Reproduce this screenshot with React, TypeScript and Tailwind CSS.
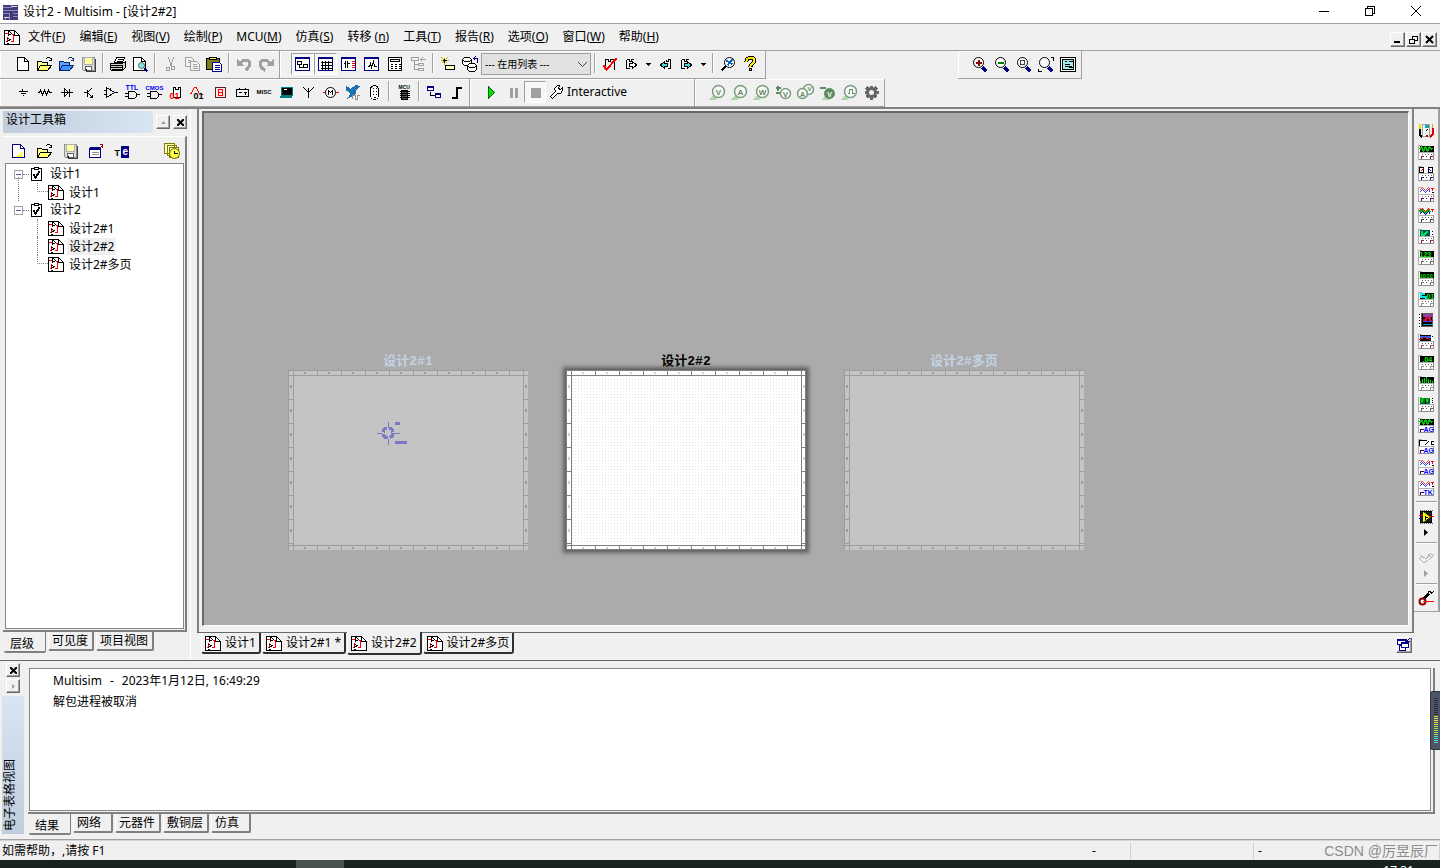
// src/App.tsx
import type { ReactNode } from "react";

type PathProps = { d: string; s?: string; f?: string; w?: number };

// stroke path, black hairline by default
const P = ({ d, s = "#000", f = "none", w = 1 }: PathProps) => (
  <path d={d} stroke={s} fill={f} strokeWidth={w} />
);

type TextProps = { x: number; y: number; c?: string; z?: number; mid?: boolean; children: string };

const T = ({ x, y, c = "#000", z = 7, mid, children }: TextProps) => (
  <text x={x} y={y} fill={c} fontSize={z} textAnchor={mid ? "middle" : "start"} fontWeight="bold" fontFamily="Liberation Sans, sans-serif">
    {children}
  </text>
);

const Lens = (
  <>
    <P d="M10 11L14 15" s="#000080" w={3} />
    <circle cx="6" cy="6" r="5" fill="#fff" stroke="#000" shapeRendering="auto" />
  </>
);

const NavyFrame = (
  <>
    <P d="M0 1H14V14H0Z" s="#000080" f="#fff" />
    <P d="M0 2H14" s="#000080" />
  </>
);

const probe = (letter: string) => (
  <>
    <P d="M0 15L5 9L9 13L6 15Z" s="none" f="#b4d4ae" />
    <circle cx="9" cy="7" r="6" fill="#f8faf8" stroke="#7d9a7d" strokeWidth="1.5" shapeRendering="auto" />
    <T x={9} y={10} c="#5f8a5f" z={8} mid>{letter}</T>
  </>
);

// small bench instrument: a screen on top, terminals underneath
const Bench = ({ screen = "#000", leads = "#000", children }: { screen?: string; leads?: string; children?: ReactNode }) => (
  <>
    <P d="M0 1H15V15H0Z" s="none" f="#fff" />
    <P d="M0 15V1H3M0 8H15" s="#b0b0b0" />
    <P d="M15 1V15H0" s="#909090" />
    <P d="M1 1H15V7H1Z" s="none" f={screen} />
    <P d="M3 10H4M6 10H7M9 10H10M12 10H13" s="#606060" />
    <P d="M2 12H5M7 12H8M11 12H14M3 11V14M12 11V14" s={leads} />
    {children}
  </>
);

// keysight / tektronix style boxes carry their maker's letters at the bottom
const Branded = ({ mark, screen = "#fff", children }: { mark: string; screen?: string; children: ReactNode }) => (
  <>
    <P d="M0 1H15V15H0Z" s="none" f="#fff" />
    <P d="M0 15V1H3M0 8H15" s="#b0b0b0" />
    <P d="M15 1V15H0" s="#909090" />
    <P d="M1 1H15V7H1Z" s="none" f={screen} />
    <T x={5} y={14} c="#00f">{mark}</T>
    <P d="M1 12H5M2 11V14" s="#400060" />
    {children}
  </>
);

const WaveGreen = <P d="M1 5L3 3L5 6L7 3L9 6L11 3L14 5" s="#00c800" w={2} />;

const WavePair = (
  <>
    <P d="M1 6L4 3L7 6L10 3L12 6" s="#2040ff" />
    <P d="M1 4L4 1L7 4L10 1L12 4" s="#f04040" />
    <P d="M12 2H15M14 1V4" s="#f00" />
    <P d="M13 6H15" />
  </>
);

const ICONS: Record<string, ReactNode> = {
  app: (
    <>
      <P d="M0 0H15V15H0Z" s="none" f="#413c78" />
      <P d="M0 3H9V0M0 6H15M0 9H7V15M10 9H15M10 12H15M3 12V15" s="#8f8bbc" />
      <P d="M9 2H14M1 13H6" s="#e0e0f4" />
    </>
  ),
  schematic: (
    <>
      <P d="M0 1H10L15 5V15H0Z" s="none" f="#fff" />
      <P d="M3 1H10L15 6V15H0V1H3" />
      <P d="M10 1V6H15" />
      <P d="M0 4H3M1 12H3V7M7 5H9V12H6" s="#f00" />
      <P d="M4 1V6L7 4Z" f="#fff" />
      <P d="M3 9L6 10L3 12M2 14H4" />
    </>
  ),
  new: <><P d="M3 1H10L14 5V14H3Z" f="#fff" /><P d="M10 1V5H14" /></>,
  newYellow: <><P d="M2 1H10L14 5V14H2Z" s="#000080" f="#fff" /><P d="M10 1V5H14" s="#000080" /><P d="M5 13L12 8V13Z" s="none" f="#ffff60" /></>,
  open: (
    <>
      <P d="M1 14V5H5L6 6H11V9" f="#ffff90" />
      <P d="M1 14L4 9H15L11 14Z" f="#ffff70" />
      <P d="M9 3L11 1H13L15 3M15 1V4H12" />
    </>
  ),
  openBlue: (
    <>
      <P d="M1 14V5H5L6 6H11V9" s="#0a246a" f="#5aa7ff" />
      <P d="M1 14L4 9H15L11 14Z" s="#0a246a" f="#3c96ff" />
      <P d="M9 3L11 1H13L15 3M15 1V4H12" s="#0a246a" />
    </>
  ),
  save: (
    <>
      <P d="M2 1H14V14H3L2 13Z" s="#909090" f="#dcdcdc" />
      <P d="M4 1H12V8H4Z" s="#b0b0b0" f="#ffffa0" />
      <P d="M5 10H11V14H5Z" s="#606060" f="#fff" />
      <P d="M6 12V14" />
      <P d="M15 2V15H5" s="#404040" />
    </>
  ),
  print: (
    <>
      <P d="M4 6L6 1H14L12 6Z" f="#fff" />
      <P d="M7 3H12M6 5H11" />
      <P d="M0 7H12L15 5V11L12 14H1L0 13Z" f="#d0d0d0" />
      <P d="M0 9H12V14M0 11H12M1 13H12" />
      <P d="M5 10H7" s="#c08000" />
    </>
  ),
  preview: (
    <>
      <P d="M1 1H9L13 5V14H1Z" f="#fff" /><P d="M9 1V5H13" />
      <circle cx="9" cy="9" r="3" fill="#80e8e8" stroke="#606060" shapeRendering="auto" />
      <P d="M12 12L15 15" s="#000080" w={2} />
    </>
  ),
  cut: <><P d="M6 1L9 10M11 1L8 10" s="#a0a0a0" /><P d="M4 11H7V14H4ZM9 10H12V13H9Z" s="#a0a0a0" /></>,
  copy: <><P d="M1 1H7L9 3V10H1Z" s="#a0a0a0" f="#f4f4f4" /><P d="M6 5H12L15 8V14H6Z" s="#a0a0a0" f="#f4f4f4" /><P d="M3 4H6M3 6H5M8 8H12M8 10H13M8 12H13" s="#a0a0a0" /></>,
  paste: (
    <>
      <P d="M0 2H13V13H0Z" f="#808020" />
      <P d="M3 3V1H10V3Z" f="#ffff60" />
      <P d="M6 6H13L15 8V15H6Z" s="#000080" f="#fff" />
      <P d="M8 9H13M8 11H13M8 13H13" s="#000080" />
    </>
  ),
  undo: <><P d="M4 7C7 2 14 3 13 8C13 11 10 13 9 14" s="#a0a0a0" w={3} /><P d="M0 2V9H7Z" s="none" f="#a0a0a0" /></>,
  redo: <><P d="M11 7C8 2 1 3 2 8C2 11 5 13 7 14" s="#a0a0a0" w={3} /><P d="M15 2V9H8Z" s="none" f="#a0a0a0" /></>,
  hierarchy: <>{NavyFrame}<P d="M2 5H6V8H2ZM8 8H12V11H8ZM4 8V11H8" /></>,
  grid: <>{NavyFrame}<P d="M4 4V13M7 4V13M10 4V13M2 6H13M2 9H13M2 12H13" /></>,
  component: <>{NavyFrame}<P d="M2 7H4M4 4V11M6 4V11M6 7H8" /><P d="M10 5H13M10 7H13M10 9H13M10 11H13" s="#e00000" /></>,
  grapher: <>{NavyFrame}<P d="M3 10H5L6 7L7 11L9 5L10 10H12" /></>,
  calc: <><P d="M1 1H14V14H1Z" f="#fff" /><P d="M3 3H12V5H3ZM3 8H5M7 8H9M11 8H13M3 10H5M7 10H9M11 10H13M3 12H5M7 12H9M11 12H13" /></>,
  tree: <><P d="M1 1H8V4H1ZM4 4V13H8M8 7H13V9H8ZM8 12H13V14H8ZM4 8H8M10 3H15M12 1L10 3L12 5" s="#a0a0a0" /></>,
  newPart: <><P d="M5 9H14V13H5Z" f="#ffffc0" /><P d="M4 1V8M0 4H8M1 1L7 7M7 1L1 7" s="#c8b000" /><P d="M4 2V6M2 4H6" /></>,
  database: (
    <>
      <P d="M0 3L2 1H7L9 3V7L7 9H2L0 7ZM0 3L2 5H7L9 3" f="#fff" />
      <P d="M5 9L7 7H12L14 9V13L12 15H7L5 13ZM5 9L7 11H12L14 9" f="#fff" />
      <P d="M11 2H15V6M13 0L11 2L13 4" s="#000080" />
    </>
  ),
  erc: <><P d="M3 13V3H6V5H8V3H12V13" /><P d="M1 9L4 13L14 2" s="#f00" w={2} /></>,
  stepOut: <><P d="M2 3H5V5H7V3H9M2 3V12H5" /><P d="M5 7H8V5L12 8.5L8 12V10H5Z" f="#fff" /></>,
  back: <><P d="M13 3V12H10M13 3H11V5H9V3" /><P d="M10 7H7V5L3 8.5L7 12V10H10Z" f="#40e0e0" /></>,
  forward: <><P d="M2 3H5V5H7V3H9M2 3V12H5" /><P d="M5 7H8V5L12 8.5L8 12V10H5Z" f="#40e0e0" /></>,
  find: <><P d="M6 9L1 14" w={2} /><circle cx="9" cy="6" r="5" fill="#fff" stroke="#000" shapeRendering="auto" /><P d="M6 4L9 6L12 3M9 6L7 9M9 6L12 8" s="#1060c0" w={2} /></>,
  help: <><path d="M4 5C4 0 12 0 12 4C12 7 8 7 8 10" fill="none" stroke="#000" strokeWidth="4" /><path d="M4 5C4 0 12 0 12 4C12 7 8 7 8 10" fill="none" stroke="#ffee00" strokeWidth="2" /><P d="M7 12H9V14H7Z" f="#fe0" /></>,
  zoomIn: <>{Lens}<P d="M3 6H9M6 3V9" s="#900000" w={2} /></>,
  zoomOut: <>{Lens}<P d="M3 6H9" s="#008000" w={2} /></>,
  zoomArea: <>{Lens}<P d="M4 4H8V8H4Z" s="#404040" /></>,
  zoomFit: <>{Lens}<P d="M12 1H15V4M0 12V15H3" /></>,
  fullscreen: <><P d="M0 1H15V15H0Z" f="#fff" /><P d="M2 3H13V13H2Z" f="#a0ecec" /><P d="M4 5H6M8 5H12M4 8H9M4 10H11M8 11H12" /></>,

  ground: <P d="M8 4V7M4 7H13M6 9H11M8 11H9" />,
  resistor: <P d="M1 8H3L4 6L6 10L8 6L10 10L12 6L13 8H15" />,
  diode: <P d="M2 8H14M6 4V12L10 8ZM11 4V12" />,
  transistor: <P d="M3 8H7M7 5V12M7 8L11 4M7 8L12 13M9 13H12V10" />,
  opamp: <P d="M4 3V13L12 8ZM1 6H4M1 10H4M12 8H15M8 3V5" />,
  ttl: <><T x={1} y={5} c="#00f">TTL</T><P d="M4 7H10L12 9V12L10 14H4ZM0 9H4M0 12H4M12 10H15" /></>,
  cmos: <><T x={-1} y={5} c="#00f" z={6}>CMOS</T><P d="M4 7H10L12 9V12L10 14H4ZM0 9H4M0 12H4M12 10H15" /></>,
  miscDigital: <><P d="M5 13V3H7V5H10V3H12V13Z" f="#fff" /><T x={1} y={14} c="#f00" z={9}>01</T></>,
  mixed: <><P d="M0 10L4 3H6L8 8L13 11" s="#f00" /><T x={3} y={14} z={9}>01</T></>,
  indicator: <><P d="M3 3H13V13H3Z" s="#602020" f="#f8e8e8" /><P d="M6 5H10V11H6ZM6 8H10" s="#f00" /></>,
  power: <><P d="M2 5H14V12H2ZM5 3V5M11 3V5M4 8H7M9 8H12M11 7V10" /></>,
  misc: <T x={0} y={9} z={6}>MISC</T>,
  advanced: <><P d="M3 3H14V11H3Z" s="#008080" f="#000" /><P d="M1 12H13" s="#008080" w={2} /><P d="M5 5H8" s="#fff" /></>,
  rf: <P d="M8 13V8L3 3M8 8L13 3M8 3V8" />,
  motor: <><P d="M0 8H3M13 8H16" s="#f00" /><circle cx="8" cy="8" r="5" fill="#fff" stroke="#000" shapeRendering="auto" /><P d="M6 10V6L8 8L10 6V10" /></>,
  ni: <><P d="M1 1L6 4L12 0L15 2L12 5L11 10L6 13L3 14L6 9L2 6Z" s="none" f="#2070b0" /><P d="M8 14V11H11V15H13V11H15" s="#909090" /></>,
  connector: <><rect x="4" y="1" width="8" height="14" rx="4" fill="#fff" stroke="#000" /><P d="M6 4H7M9 4H10M6 7H7M9 7H10M6 10H7M9 10H10M7 13H9" /></>,
  mcu: <><T x={2} y={4} z={5}>MCU</T><P d="M5 6H11V15H5Z" f="#555" /><P d="M3 7H13M3 9H13M3 11H13M3 13H13" /></>,
  block: <><P d="M1 2H7V6H1ZM9 9H14V13H9Z" s="#000080" f="#fff" /><P d="M1 2H7M9 9H14" s="#000080" w={2} /><P d="M4 7V11H8" /></>,
  bus: <P d="M3 13H8V3H13" w={2} />,
  play: <P d="M5 2V14L11 8Z" s="#006000" f="#00e000" />,
  pause: <P d="M6 3V13M11 3V13" s="#a0a0a0" w={3} />,
  stop: <P d="M3 3H13V13H3Z" s="none" f="#a0a0a0" />,
  wrench: <P d="M2 12L7 7L6 4L9 1H11L10 4L12 5L14 3V6L12 9H9L4 14Z" f="#fff" />,

  probeV: probe("V"),
  probeA: probe("A"),
  probeW: probe("W"),
  probeDiff: <><P d="M0 3H5M2 1V6M0 8H5" s="#5f8a5f" w={2} /><circle cx="10" cy="9" r="5" fill="#f8faf8" stroke="#7d9a7d" strokeWidth="1.5" shapeRendering="auto" /><T x={10} y={12} c="#5f8a5f" z={8} mid>V</T></>,
  probeVA: <><circle cx="11" cy="5" r="5" fill="#f8faf8" stroke="#7d9a7d" strokeWidth="1.5" shapeRendering="auto" /><circle cx="5" cy="9" r="5" fill="#f8faf8" stroke="#7d9a7d" strokeWidth="1.5" shapeRendering="auto" /><T x={5} y={12} c="#5f8a5f" mid>A</T><T x={12} y={6} c="#5f8a5f" z={6} mid>V</T></>,
  probeRef: <><P d="M0 3H6" s="#5f8a5f" w={2} /><P d="M3 15L7 8L11 15Z" s="none" f="#b4d4ae" /><circle cx="10" cy="9" r="5" fill="#5f8a5f" stroke="#5f8a5f" shapeRendering="auto" /><T x={10} y={12} c="#fff" mid>V</T></>,
  probeDigital: <>{probe("")}<P d="M6 9H8V5H11V9H13" s="#5f8a5f" /></>,
  gear: <><circle cx="8" cy="8" r="4" fill="none" stroke="#666" strokeWidth="3" shapeRendering="auto" /><P d="M8 1V4M8 12V15M1 8H4M12 8H15M3 3L5 5M11 11L13 13M13 3L11 5M3 13L5 11" s="#666" w={3} /></>,

  window: <><P d="M1 5H12V14H1Z" s="#000080" f="#fff" /><P d="M1 5H12" s="#000080" w={3} /><P d="M3 9H10M3 11H10" s="#909090" /><P d="M11 5L14 2M11 1H14V4" s="#900000" /></>,
  rename: <><T x={0} y={12} z={9}>T</T><P d="M6 2H14V14H6Z" s="none" f="#000080" /><T x={8} y={11} c="#fff" z={10}>e</T></>,
  history: (
    <>
      <P d="M0 0H10V10H0ZM3 2H12V12H3Z" s="#808000" f="#ffffc0" />
      <P d="M5 4H14V14H5Z" s="#808000" f="#fff" />
      <circle cx="10" cy="10" r="5" fill="#ffff40" stroke="#606000" shapeRendering="auto" />
      <P d="M10 7V10H13" />
    </>
  ),
  check: <><P d="M2 2H12V14H2Z" f="#fff" /><P d="M5 1H9V3H5Z" f="#fff" /><P d="M4 8L6 11L10 5" w={2} /></>,
  cascade: <><P d="M1 2H9V7H1ZM3 8H9V13H3Z" s="#000080" f="#fff" /><P d="M5 5H12V10H5Z" s="#000080" f="#fff" /><P d="M1 3H9M5 6H12M10 4L13 1M10 1V4H13" s="#000080" /></>,

  multimeter: (
    <>
      <P d="M1 0V5" s="#e8e000" w={2} /><P d="M1 5V11L4 14" w={2} />
      <P d="M14 4V11L11 14" s="#e00000" w={2} /><P d="M14 0V4" s="#f0a000" />
      <P d="M4 1H11V13H4Z" s="#a0a0a0" f="#f4f4f4" />
      <P d="M6 3H10" s="#00b0b0" w={3} /><P d="M7 8L9 6" /><P d="M8 11V13" s="#802000" w={2} />
    </>
  ),
  funcGen: <Bench leads="#802020">{WaveGreen}</Bench>,
  wattmeter: <Bench screen="#fff" leads="#301060"><P d="M1 2H5V7H1ZM10 2H14V7H10Z" /><P d="M2 6L5 3" s="#f00" /><P d="M10 3L13 6" s="#00f" /></Bench>,
  scope: <Bench screen="#fff" leads="#600060">{WavePair}</Bench>,
  scope4: <Bench screen="#fff" leads="#305030"><P d="M1 5L4 2L7 5L10 2L12 5" s="#00c000" w={2} /><P d="M1 3L4 1L7 4L10 1L12 3" s="#f00" /><P d="M1 7L4 4L7 7L10 4L12 7" s="#00f" /><P d="M12 2H15M14 1V4" s="#f00" /></Bench>,
  bode: <Bench leads="#803030"><P d="M1 1H11V7H1Z" s="none" f="#005050" /><P d="M3 2V6H6L9 3" s="#00e060" w={2} /><P d="M11 1H15V7H11Z" s="none" f="#fff" /><P d="M13 3H14M13 6H14" /></Bench>,
  counter: <Bench leads="#606060"><T x={1} y={7} c="#00f000">123</T></Bench>,
  wordGen: <Bench leads="#707070"><T x={1} y={7} c="#00e000" z={6}>1010</T></Bench>,
  converter: <Bench leads="#909090"><P d="M6 2H2V5H7V7" s="#00e8e8" w={2} /><T x={8} y={7} c="#00f000">01</T></Bench>,
  analyzer: <><P d="M0 1H2V15H0Z" s="none" f="#fff" /><path d="M1 1V15" stroke="#000" strokeDasharray="1 2" /><P d="M3 1H14V14H3Z" s="#606060" f="#000" /><P d="M4 3H14" s="#9040a0" w={3} /><P d="M4 7H7V5H11V8H14" s="#e00040" w={2} /><P d="M4 9H14" s="#4040e0" /><P d="M4 12H14" s="#00a0a0" /></>,
  iv: <Bench leads="#905050"><P d="M1 3H12" s="#2060ff" w={2} /><P d="M1 6L6 4L12 6" s="#f00" /><P d="M12 1H15V7H12Z" s="none" f="#fff" /><P d="M13 3H14" /></Bench>,
  distortion: <Bench leads="#909090"><T x={4} y={7} c="#00f000">.04</T></Bench>,
  spectrum: <Bench leads="#909090"><P d="M2 7V5M4 7V3M6 7V2M8 7V1M10 7V3M12 7V4M14 7V5" s="#00e000" /></Bench>,
  network: <Bench leads="#606060"><P d="M1 1H6V7H1ZM7 1H11V7H7Z" s="none" f="#007030" /><P d="M2 2L5 6M5 2L2 6M7 2L10 6M10 2L7 6" s="#00e000" /><P d="M11 1H15V7H11Z" s="none" f="#fff" /><P d="M13 2H14M13 4H14M13 6H14" /></Bench>,
  agGen: <Branded mark="AG" screen="#000">{WaveGreen}</Branded>,
  agMeter: <Branded mark="AG"><P d="M1 2H8M1 1V7M6 7L10 3M12 3H15M13 2V5M12 6H15" /></Branded>,
  agScope: <Branded mark="AG">{WavePair}</Branded>,
  tkScope: <Branded mark="TK">{WavePair}</Branded>,
  labview: <><P d="M2 2H13V13H2Z" f="#102020" /><path d="M1 1H15M1 14H15" stroke="#606060" strokeDasharray="1 1" /><P d="M0 6H4M11 7H15" s="#f00" /><P d="M0 9H4" s="#00f" /><path d="M5 3V12L11 7.5Z" fill="#ffff00" stroke="#ffff00" shapeRendering="auto" /><P d="M6 8H9M7 6V10" /></>,
  elvis: <P d="M1 8L5 12L10 10L15 5L12 3L8 8L3 6ZM2 5L6 8M10 4L13 7" s="#b0b0b0" />,
  clamp: <><circle cx="4" cy="10" r="3" fill="#fff" stroke="#900000" strokeWidth="2" shapeRendering="auto" /><P d="M4 10H15" s="#f00" /><P d="M6 7L10 2" w={3} /><P d="M10 2V0H12L13 2L15 0" /></>,
};

function Icon({ name }: { name: string }) {
  return (
    <svg width="16" height="16" viewBox="-0.5 -0.5 16 16" shapeRendering="crispEdges" className="shrink-0 overflow-visible" aria-hidden="true">
      {ICONS[name]}
    </svg>
  );
}

function Tool({ name, wide, on }: { name: string; wide?: boolean; on?: boolean }) {
  return (
    <button
      type="button"
      aria-label={name}
      className={`flex h-[22px] shrink-0 items-center justify-center ${wide ? "w-[23px]" : "w-[22px]"} ${
        on ? "border border-t-[#a0a0a0] border-l-[#a0a0a0] border-r-white border-b-white bg-[#f7f7f7]" : ""
      }`}
    >
      <Icon name={name} />
    </button>
  );
}

const Sep = () => <span className="mx-[3px] h-5 w-[2px] shrink-0 border-l border-[#a0a0a0] bg-white" />;

const Drop = ({ label }: { label: string }) => (
  <button type="button" aria-label={label} className="flex h-[22px] w-[11px] items-center justify-center">
    <svg width="5" height="3" shapeRendering="crispEdges"><path d="M0 0H5L2.5 3Z" /></svg>
  </button>
);

function Bar({ children, className = "" }: { children: ReactNode; className?: string }) {
  return (
    <div className={`flex h-7 shrink-0 items-start border-r border-b border-[#a0a0a0] pt-[2px] shadow-[inset_1px_1px_0_#fff] ${className}`}>
      {children}
    </div>
  );
}

const MENUS = [
  ["文件(", "F"], ["编辑(", "E"], ["视图(", "V"], ["绘制(", "P"], ["MCU(", "M"], ["仿真(", "S"],
  ["转移 (", "n"], ["工具(", "T"], ["报告(", "R"], ["选项(", "O"], ["窗口(", "W"], ["帮助(", "H"],
];

const PARTS = [
  "ground", "resistor", "diode", "transistor", "opamp", "ttl", "cmos", "miscDigital", "mixed",
  "indicator", "power", "misc", "advanced", "rf", "motor", "ni", "connector",
];

const PROBES = ["probeV", "probeA", "probeW", "probeDiff", "probeVA", "probeRef", "probeDigital", "gear"];

const INSTRUMENTS = [
  "multimeter", "funcGen", "wattmeter", "scope", "scope4", "bode", "counter", "wordGen", "converter",
  "analyzer", "iv", "distortion", "spectrum", "network", "agGen", "agMeter", "agScope", "tkScope",
];

function TitleBar() {
  return (
    <header className="flex h-6 shrink-0 items-center border-b border-[#a0a0a0] bg-white pr-px pl-[2px]">
      <Icon name="app" />
      <h1 className="ml-[5px] flex-1">设计2 - Multisim - [设计2#2]</h1>
      <button type="button" aria-label="最小化" className="flex h-full w-[46px] items-center justify-center pb-[2px]">
        <svg width="10" height="10"><path d="M0 5.5H10" stroke="#000" /></svg>
      </button>
      <button type="button" aria-label="还原" className="flex h-full w-[46px] items-center justify-center pb-[2px]">
        <svg width="10" height="10" fill="none" stroke="#000" shapeRendering="crispEdges"><path d="M.5 2.5H7.5V9.5H.5ZM2.5 2V.5H9.5V7.5H8" /></svg>
      </button>
      <button type="button" aria-label="关闭" className="flex h-full w-[46px] items-center justify-center pb-[2px]">
        <svg width="10" height="10"><path d="M0 0L10 10M10 0L0 10" stroke="#000" /></svg>
      </button>
    </header>
  );
}

const RAISED = "border border-t-white border-l-white border-r-[#696969] border-b-[#696969] shadow-[inset_-1px_-1px_0_#a0a0a0]";

function MenuBar() {
  return (
    <nav className="flex h-[27px] shrink-0 items-center border-b border-[#a0a0a0] pl-1">
      <Icon name="schematic" />
      <div className="ml-2 flex flex-1 gap-[14px]">
        {MENUS.map(([text, key]) => (
          <button key={text} type="button" className="whitespace-pre">
            {text}<u>{key}</u>)
          </button>
        ))}
      </div>
      <div className="mt-[5px] mr-[3px] flex gap-px">
        <button type="button" aria-label="最小化窗口" className={`flex h-[15px] w-[15px] items-center justify-center ${RAISED}`}>
          <svg width="9" height="9"><path d="M1 7H7" stroke="#000" strokeWidth="2" /></svg>
        </button>
        <button type="button" aria-label="还原窗口" className={`flex h-[15px] w-[15px] items-center justify-center ${RAISED}`}>
          <svg width="9" height="9" fill="none" stroke="#000" shapeRendering="crispEdges"><path d="M.5 4.5H5.5V8.5H.5ZM3.5 4V1.5H8.5V5.5H6M3 1H9M0 4H6" /></svg>
        </button>
        <button type="button" aria-label="关闭窗口" className={`flex h-[15px] w-[15px] items-center justify-center ${RAISED}`}>
          <svg width="9" height="9"><path d="M1 1L8 8M8 1L1 8" stroke="#000" strokeWidth="2" /></svg>
        </button>
      </div>
    </nav>
  );
}

function Toolbars() {
  return (
    <div className="shrink-0 border-b-2 border-[#808080]">
      <div className="flex">
        <Bar className="pr-[2px] pl-[11px]">
          {["new", "open", "openBlue", "save"].map((n) => <Tool key={n} name={n} />)}
          <Sep />
          <Tool name="print" />
          <Tool name="preview" />
          <Sep />
          {["cut", "copy", "paste"].map((n) => <Tool key={n} name={n} />)}
          <Sep />
          <Tool name="undo" />
          <Tool name="redo" />
        </Bar>
        <Bar className="pr-1 pl-[11px]">
          <Tool name="hierarchy" wide on />
          <Tool name="grid" wide on />
          {["component", "grapher", "calc", "tree"].map((n) => <Tool key={n} name={n} wide />)}
          <Sep />
          <Tool name="newPart" />
          <Tool name="database" />
          <div className="relative">
            <select aria-label="在用列表" className="h-[22px] w-[110px] appearance-none border border-[#a0a0a0] bg-[#e1e1e1] pl-[3px] text-[10px]">
              <option>--- 在用列表 ---</option>
            </select>
            <svg width="9" height="5" className="pointer-events-none absolute top-[9px] right-1"><path d="M0 0L4.5 4.5L9 0" fill="none" stroke="#444" /></svg>
          </div>
          <Sep />
          <Tool name="erc" />
          <Tool name="stepOut" />
          <Drop label="步出选项" />
          <Tool name="back" />
          <Tool name="forward" />
          <Drop label="前进选项" />
          <Sep />
          <Tool name="find" />
          <Tool name="help" />
        </Bar>
        <Bar className="mr-[358px] ml-auto pr-[2px] pl-[11px]">
          {["zoomIn", "zoomOut", "zoomArea", "zoomFit", "fullscreen"].map((n) => <Tool key={n} name={n} />)}
        </Bar>
      </div>
      <div className="flex">
        <Bar className="pr-[2px] pl-[11px]">
          {PARTS.map((n) => <Tool key={n} name={n} />)}
          <Sep />
          <Tool name="mcu" />
          <Sep />
          <Tool name="block" />
          <Tool name="bus" />
        </Bar>
        <Bar className="w-[225px] pl-[10px]">
          <Tool name="play" />
          <Tool name="pause" />
          <Tool name="stop" on />
          <button type="button" className="ml-[2px] flex h-[22px] items-center gap-[3px]">
            <Icon name="wrench" />
            Interactive
          </button>
        </Bar>
        <Bar className="pr-[2px] pl-[11px]">
          {PROBES.map((n) => <Tool key={n} name={n} />)}
        </Bar>
      </div>
    </div>
  );
}

const TREE = [
  { name: "设计1", sheets: ["设计1"] },
  { name: "设计2", sheets: ["设计2#1", "设计2#2", "设计2#多页"] },
];

function DesignToolbox() {
  return (
    <aside className="flex w-[191px] shrink-0 flex-col border-r border-white pb-[3px] pl-[3px]">
      <div className="mt-[2px] flex h-[22px] shrink-0 items-center gap-[3px] pr-[3px]">
        <h2 className="h-full flex-1 bg-linear-to-r from-[#bfcddc] to-[#d8e5f3] pl-[3px] leading-[18px]">设计工具箱</h2>
        <button type="button" aria-label="收起" className={`flex h-[14px] w-[14px] items-center justify-center ${RAISED}`}>
          <svg width="5" height="3"><path d="M0 3H5L2.5 0Z" fill="#a0a0a0" /></svg>
        </button>
        <button type="button" aria-label="关闭工具箱" className={`flex h-[14px] w-[14px] items-center justify-center ${RAISED}`}>
          <svg width="7" height="7"><path d="M0 0L7 7M7 0L0 7" stroke="#000" strokeWidth="2" /></svg>
        </button>
      </div>
      <div className="mt-[3px] mr-[3px] flex min-h-0 flex-1 flex-col border-t border-r-2 border-b-2 border-t-white border-r-[#808080] border-b-[#808080] pb-px">
        <div className="flex h-[26px] shrink-0 items-center gap-1 pt-[2px] pr-[2px] pl-1">
          {["newYellow", "open", "save", "window", "rename"].map((n) => <Tool key={n} name={n} />)}
          <span className="flex-1" />
          <Tool name="history" />
        </div>
        <div className="mr-px ml-[2px] flex-1 border border-[#828790] bg-white pt-px">
          <ul className="relative">
            <li aria-hidden="true" className="absolute top-3 left-3 h-6 border-l border-dotted border-[#808080]" />
            {TREE.map((design) => (
              <li key={design.name}>
                <div className="flex h-[18px] items-center pl-2">
                  <button type="button" aria-label="折叠" className="flex h-[9px] w-[9px] items-center justify-center border border-[#a0a0a0] bg-white">
                    <span className="h-px w-[5px] bg-[#4060a0]" />
                  </button>
                  <span className="w-[6px] border-t border-dotted border-[#808080]" />
                  <Icon name="check" />
                  <span className="ml-1 px-px">{design.name}</span>
                </div>
                <ul>
                  {design.sheets.map((sheet, i) => (
                    <li key={sheet} className="flex h-[18px] items-center pl-[31px]">
                      <span className={`w-[11px] self-start border-l border-dotted border-[#808080] ${i === design.sheets.length - 1 ? "h-[9px] border-b" : "h-[18px]"}`} />
                      <Icon name="schematic" />
                      <span className={`ml-[3px] px-[2px] leading-[17px] ${sheet === "设计2#2" ? "bg-[#f0f0f0]" : ""}`}>{sheet}</span>
                    </li>
                  ))}
                </ul>
              </li>
            ))}
          </ul>
        </div>
      </div>
      <PanelTabs tabs={["层级", "可见度", "项目视图"]} />
    </aside>
  );
}

function PanelTabs({ tabs }: { tabs: string[] }) {
  return (
    <div className="flex h-[25px] shrink-0 items-start gap-[2px] pl-px">
      {tabs.map((tab, i) => (
        <button
          key={tab}
          type="button"
          className={`rounded-b-[2px] border-b-2 border-[#808080] text-left leading-4 ${
            i === 0 ? "h-[21px] w-[42px] border-r pt-1 pl-[6px]" : "h-[19px] min-w-10 border-r-2 border-l border-l-white pr-1 pl-[3px]"
          }`}
        >
          {tab}
        </button>
      ))}
    </div>
  );
}

const COLS = [29, 53, 77, 101, 125, 149, 173, 197, 221];
const ROWS = [29, 53, 77, 101, 125, 149, 173];

function Sheet({ title, active, children }: { title: string; active?: boolean; children?: ReactNode }) {
  const line = active ? "#808080" : "#9c9c9c";
  return (
    <figure className="flex w-[240px] flex-col items-center">
      <figcaption className={`font-['Liberation_Mono','Noto_Sans_CJK_SC',monospace] text-[13px] leading-4 font-bold ${active ? "text-black" : "text-[#c3d2e2]"}`}>
        {title}
      </figcaption>
      <svg
        viewBox="0 0 240 180"
        shapeRendering="crispEdges"
        className={`w-full ${active ? "shadow-[0_0_4px_3px_#606060]" : ""}`}
        aria-hidden="true"
      >
        <defs>
          <pattern id="dots" width="3" height="3" patternUnits="userSpaceOnUse">
            <rect width="1" height="1" fill="#e4e4e4" />
          </pattern>
        </defs>
        <rect width="240" height="180" fill={active ? "#fff" : "#c4c4c4"} />
        {active && <rect x="6" y="6" width="228" height="168" fill="url(#dots)" />}
        <g fill="none" stroke={line}>
          <path d="M0.5 180V0.5H239.5M5.5 0V180M235.5 0V180M0 5.5H240M0 175.5H240" />
          {active && <path d="M239.5 0V179.5H0" />}
          {COLS.map((x) => <path key={x} d={`M${x}.5 0V5M${x}.5 175V180`} />)}
          {ROWS.map((y) => <path key={y} d={`M0 ${y}.5H5M235 ${y}.5H240`} />)}
        </g>
        <g fill={active ? "#d0d0d0" : "#9c9c9c"}>
          {COLS.map((x) => <path key={x} d={`M${x - 13} 2h2v2h-2zM${x - 13} 177h2v2h-2z`} />)}
          {ROWS.map((y) => <path key={y} d={`M2 ${y - 14}h2v3h-2zM237 ${y - 14}h2v3h-2z`} />)}
        </g>
        {children}
      </svg>
    </figure>
  );
}

function Workspace() {
  return (
    <div className="flex-1 overflow-hidden border-t-2 border-r border-b border-l-2 border-t-[#696969] border-r-white border-b-white border-l-[#696969] bg-[#ababab]">
      <div className="flex gap-[38px] pt-[241px] pl-[84px]">
        <Sheet title="设计2#1">
          <g fill="none" stroke="#7b78c4">
            <circle cx="100" cy="63" r="5" strokeWidth="3" strokeDasharray="6 2" />
            <path d="M100.5 52V58M100.5 69V75M89 63.5H94M106 63.5H112" />
            <path d="M107 53H112" strokeWidth="3" />
            <path d="M107 72H119" strokeWidth="3" />
          </g>
        </Sheet>
        <Sheet title="设计2#2" active />
        <Sheet title="设计2#多页" />
      </div>
    </div>
  );
}

function DocTabs() {
  return (
    <div className="flex h-7 shrink-0 items-start gap-px border-t border-[#696969] pr-[2px] pl-1">
      {["设计1", "设计2#1 *", "设计2#2", "设计2#多页"].map((tab) => (
        <button
          key={tab}
          type="button"
          className={`flex items-center gap-1 rounded-b-[3px] border-r-2 border-b-2 border-l border-[#303030] border-l-white pr-[3px] pl-[3px] ${
            tab === "设计2#2" ? "-mt-px h-[23px] bg-[#f0f0f0]" : "h-[21px]"
          }`}
        >
          <Icon name="schematic" />
          {tab}
        </button>
      ))}
      <button type="button" aria-label="窗口列表" className={`mt-1 ml-auto flex h-4 w-4 items-center justify-center ${RAISED}`}>
        <Icon name="cascade" />
      </button>
    </div>
  );
}

function InstrumentBar() {
  const divider = <span className="my-[3px] h-[2px] w-[21px] border-t border-[#a0a0a0] bg-white" />;
  const arrow = (color: string) => (
    <svg width="4" height="7" className="mt-[2px] mb-[3px]"><path d="M0 0V7L4 3.5Z" fill={color} /></svg>
  );
  return (
    <aside className="w-[26px] shrink-0">
      <div className="flex flex-col items-center border-r-2 border-b border-[#a0a0a0] pt-[11px] pb-[2px]">
        {INSTRUMENTS.map((n) => (
          <button key={n} type="button" aria-label={n} className="flex h-[21px] w-[21px] items-center justify-center">
            <Icon name={n} />
          </button>
        ))}
        {divider}
        <button type="button" aria-label="LabVIEW" className="flex h-[21px] items-center"><Icon name="labview" /></button>
        {arrow("#000")}
        {divider}
        <button type="button" aria-label="ELVIS" className="flex h-[21px] items-center"><Icon name="elvis" /></button>
        {arrow("#a0a0a0")}
        {divider}
        <button type="button" aria-label="电流探针" className="flex h-[21px] items-center"><Icon name="clamp" /></button>
      </div>
    </aside>
  );
}

function SpreadsheetView() {
  return (
    <section className="flex h-[180px] shrink-0 border-t border-b border-t-[#696969] border-b-[#a0a0a0]">
      <div className="flex w-7 shrink-0 flex-col pt-[2px] pb-[5px] pl-[2px]">
        <button type="button" aria-label="关闭视图" className={`ml-1 flex h-[14px] w-[14px] items-center justify-center ${RAISED}`}>
          <svg width="7" height="7"><path d="M0 0L7 7M7 0L0 7" stroke="#000" strokeWidth="2" /></svg>
        </button>
        <button type="button" aria-label="展开视图" className={`mt-[2px] ml-1 flex h-[14px] w-[14px] items-center justify-center ${RAISED}`}>
          <svg width="3" height="5"><path d="M0 0V5L3 2.5Z" fill="#a0a0a0" /></svg>
        </button>
        <div className="mt-[3px] w-[22px] flex-1 rotate-180 bg-linear-to-b from-[#bfcddc] to-[#d8e5f3] pt-[3px] pl-[6px] leading-4 [text-orientation:sideways] [writing-mode:vertical-rl]">
          电子表格视图
        </div>
      </div>
      <div className="flex flex-1 flex-col pt-[7px]">
        <div className="mr-[5px] flex flex-1 flex-col border-r-2 border-b-2 border-r-[#808080] border-b-[#808080] pr-[2px] pb-px">
          <div className="ml-px flex-1 border border-[#828790] bg-white pt-px pl-[23px] leading-[21px]">
            <p className="flex gap-2">
              <span>Multisim</span>
              <span>-</span>
              <span>2023年1月12日, 16:49:29</span>
            </p>
            <p>解包进程被取消</p>
          </div>
        </div>
        <PanelTabs tabs={["结果", "网络", "元器件", "敷铜层", "仿真"]} />
      </div>
    </section>
  );
}

function StatusBar() {
  return (
    <footer className="relative flex h-5 shrink-0 items-center border-t border-[#d4d4d4] pt-px">
      <span className="flex-1 pl-[2px]">如需帮助，,请按 F1</span>
      <span className="h-4 w-[38px]">-</span>
      <span className="h-4 w-[123px] border-l border-[#d0d0d0]" />
      <span className="h-4 w-[123px] border-l border-[#d0d0d0] pl-1">-</span>
      <span className="h-4 w-16 border-x border-[#d0d0d0]" />
      <span className="absolute top-0 right-[2px] font-['Liberation_Sans','Noto_Sans_CJK_SC',sans-serif] text-sm leading-5 text-[#8c8c8c]">
        CSDN @厉昱辰厂
      </span>
    </footer>
  );
}

// level meter docked at the screen's right edge
function LevelMeter() {
  return (
    <div className="absolute top-[691px] right-0 flex h-[59px] w-[10px] flex-col gap-px rounded-l-[3px] border border-r-0 border-[#303544] bg-[#4d5465] pt-[6px] pl-[3px]">
      {Array.from({ length: 23 }, (_, i) => (
        <span
          key={i}
          className={`h-px w-1 ${i < 9 ? "bg-[#2a2f3d]" : i < 14 ? "bg-[#e8e040]" : i < 19 ? "bg-[#90e060]" : "bg-[#50e0c0]"}`}
        />
      ))}
    </div>
  );
}

export default function App() {
  return (
    <div className="relative flex h-screen flex-col overflow-hidden bg-[#f0f0f0] font-['Noto_Sans','Noto_Sans_CJK_SC',sans-serif] text-xs leading-4 text-black">
      <TitleBar />
      <MenuBar />
      <Toolbars />
      <main className="flex min-h-0 flex-1">
        <DesignToolbox />
        <div className="ml-[6px] flex min-w-0 flex-1 flex-col">
          <div className="flex min-h-0 flex-1 flex-col border-r-2 border-l-2 border-[#808080] pt-[2px] pr-[3px] pb-[6px] pl-[3px]">
            <Workspace />
          </div>
          <DocTabs />
        </div>
        <InstrumentBar />
      </main>
      <SpreadsheetView />
      <StatusBar />
      <div className="flex h-2 shrink-0 overflow-hidden bg-[#1a2220]">
        <span className="ml-[296px] w-12 bg-[#485050]" />
        <time className="mr-[26px] ml-auto pt-[3px] text-white">17:31</time>
      </div>
      <LevelMeter />
    </div>
  );
}
